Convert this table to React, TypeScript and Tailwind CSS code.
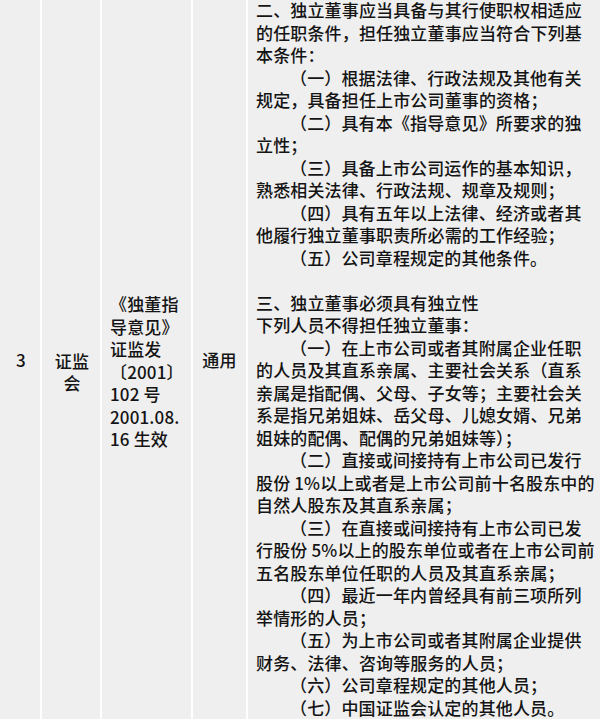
import React from "react";

const lines: { t: string; indent?: boolean }[] = [
  { t: "二、独立董事应当具备与其行使职权相适应" },
  { t: "的任职条件，担任独立董事应当符合下列基" },
  { t: "本条件：" },
  { t: "（一）根据法律、行政法规及其他有关", indent: true },
  { t: "规定，具备担任上市公司董事的资格；" },
  { t: "（二）具有本《指导意见》所要求的独", indent: true },
  { t: "立性；" },
  { t: "（三）具备上市公司运作的基本知识，", indent: true },
  { t: "熟悉相关法律、行政法规、规章及规则；" },
  { t: "（四）具有五年以上法律、经济或者其", indent: true },
  { t: "他履行独立董事职责所必需的工作经验；" },
  { t: "（五）公司章程规定的其他条件。", indent: true },
  { t: "\u00a0" },
  { t: "三、独立董事必须具有独立性" },
  { t: "下列人员不得担任独立董事：" },
  { t: "（一）在上市公司或者其附属企业任职", indent: true },
  { t: "的人员及其直系亲属、主要社会关系（直系" },
  { t: "亲属是指配偶、父母、子女等；主要社会关" },
  { t: "系是指兄弟姐妹、岳父母、儿媳女婿、兄弟" },
  { t: "姐妹的配偶、配偶的兄弟姐妹等）；" },
  { t: "（二）直接或间接持有上市公司已发行", indent: true },
  { t: "股份 1%以上或者是上市公司前十名股东中的" },
  { t: "自然人股东及其直系亲属；" },
  { t: "（三）在直接或间接持有上市公司已发", indent: true },
  { t: "行股份 5%以上的股东单位或者在上市公司前" },
  { t: "五名股东单位任职的人员及其直系亲属；" },
  { t: "（四）最近一年内曾经具有前三项所列", indent: true },
  { t: "举情形的人员；" },
  { t: "（五）为上市公司或者其附属企业提供", indent: true },
  { t: "财务、法律、咨询等服务的人员；" },
  { t: "（六）公司章程规定的其他人员；", indent: true },
  { t: "（七）中国证监会认定的其他人员。", indent: true },
];

const col3 = ["《独董指", "导意见》", "证监发", "〔2001〕", "102 号", "2001.08.", "16 生效"];

export default function App() {
  return (
    <div
      className="w-[600px] h-[722px] bg-white overflow-hidden text-[#141414]"
      style={{ fontFamily: '"Noto Sans CJK SC", "Noto Sans", sans-serif' }}
    >
      <div className="flex h-[719px] gap-[2px] text-[17px] font-medium leading-[22.5px] tracking-[0.15px]">
        <div className="w-[40px] bg-[#efefef] flex flex-col justify-center items-center pt-[2px] pl-[2px]">
          <div>3</div>
        </div>
        <div className="w-[58px] bg-[#efefef] flex flex-col justify-center items-center pt-[25px] pl-[2px]">
          <div>证监</div>
          <div>会</div>
        </div>
        <div className="w-[89px] bg-[#efefef] flex flex-col justify-center pl-[8px] pt-[25px]">
          {col3.map((l, i) => (
            <div key={i} className="whitespace-nowrap">
              {l}
            </div>
          ))}
        </div>
        <div className="w-[53px] bg-[#efefef] flex flex-col justify-center items-center pt-[2px]">
          <div>通用</div>
        </div>
        <div className="flex-1 bg-[#efefef] pl-[8px] overflow-hidden">
          <div className="-mt-[1px]">
            {lines.map((l, i) => (
              <div key={i} className={l.indent ? "whitespace-nowrap pl-[2em]" : "whitespace-nowrap"}>
                {l.t}
              </div>
            ))}
          </div>
        </div>
      </div>
    </div>
  );
}
